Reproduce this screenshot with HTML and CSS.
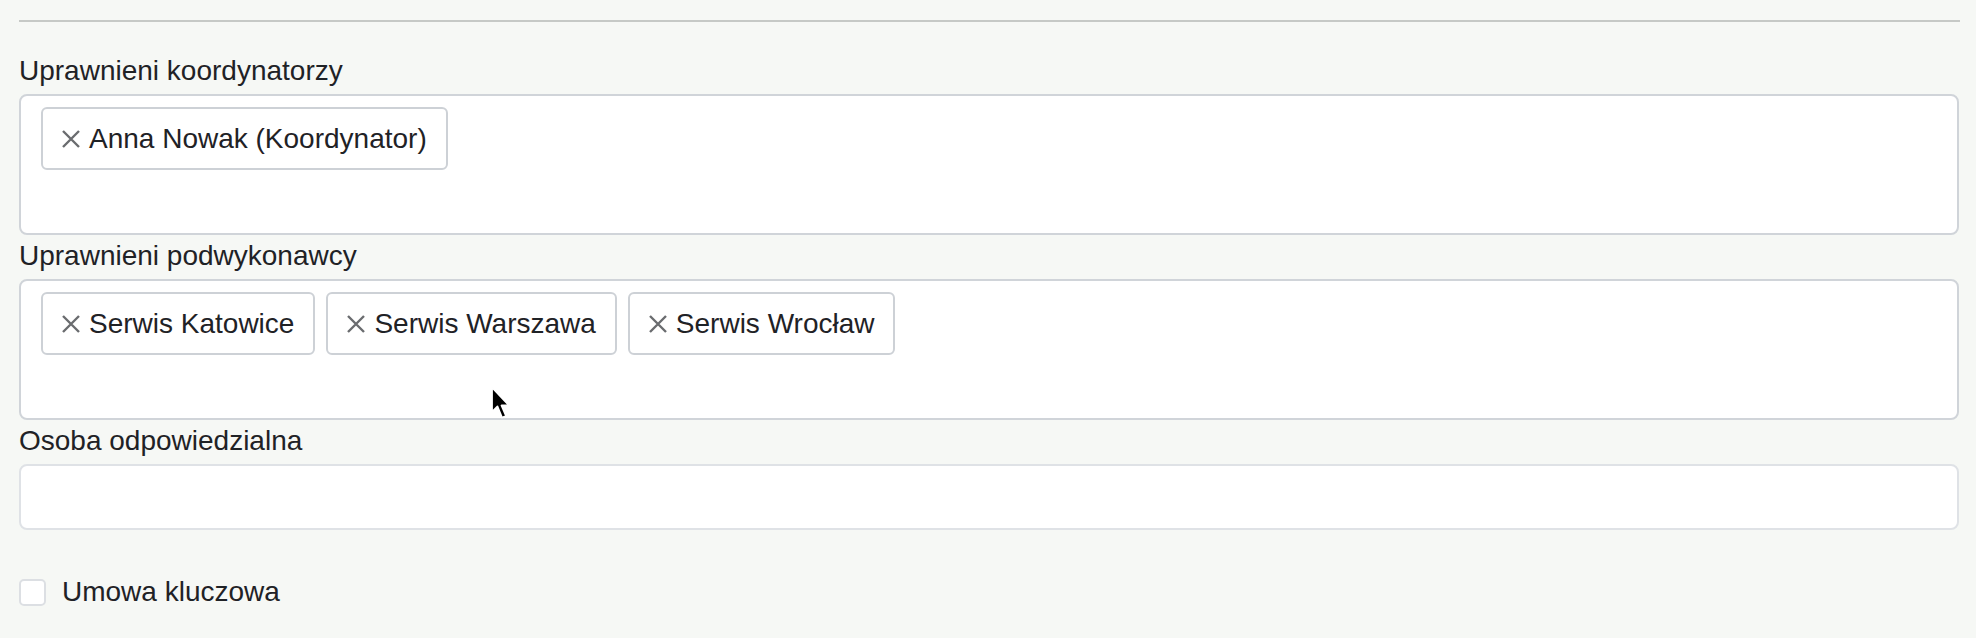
FILE: index.html
```html
<!DOCTYPE html>
<html lang="pl">
<head>
<meta charset="utf-8">
<title>Formularz</title>
<link rel="stylesheet" href="styles.css">
</head>
<body>
<div class="page">
  <div class="divider"></div>

  <div class="field">
    <label class="label">Uprawnieni koordynatorzy</label>
    <div class="multi">
      <div class="chips">
        <span class="chip"><svg class="x" viewBox="0 0 20 20"><path d="M2 2 L18 18 M18 2 L2 18"/></svg><span>Anna Nowak (Koordynator)</span></span>
      </div>
    </div>
  </div>

  <div class="field">
    <label class="label">Uprawnieni podwykonawcy</label>
    <div class="multi">
      <div class="chips">
        <span class="chip"><svg class="x" viewBox="0 0 20 20"><path d="M2 2 L18 18 M18 2 L2 18"/></svg><span>Serwis Katowice</span></span>
        <span class="chip"><svg class="x" viewBox="0 0 20 20"><path d="M2 2 L18 18 M18 2 L2 18"/></svg><span>Serwis Warszawa</span></span>
        <span class="chip"><svg class="x" viewBox="0 0 20 20"><path d="M2 2 L18 18 M18 2 L2 18"/></svg><span>Serwis Wrocław</span></span>
      </div>
    </div>
  </div>

  <div class="field">
    <label class="label">Osoba odpowiedzialna</label>
    <div class="input"></div>
  </div>

  <div class="check-row">
    <span class="checkbox"></span>
    <span class="check-label">Umowa kluczowa</span>
  </div>
</div>

<svg class="cursor" viewBox="0 0 24 38" width="24" height="38">
  <path d="M2 1.5 L2 26 L7.5 20.5 L12 31.5 L16 30 L11.5 19.5 L19 19.5 Z" fill="#000" stroke="#fff" stroke-width="1.8" stroke-linejoin="round"/>
</svg>
</body>
</html>
```

FILE: styles.css
```css
html, body {
  margin: 0;
  padding: 0;
  background: #f6f8f5;
}

body {
  font-family: "Liberation Sans", Arial, sans-serif;
  color: #1f2226;
  position: relative;
  width: 1976px;
  height: 638px;
  overflow: hidden;
}

.page {
  padding: 20px 17px 0 19px;
}

.divider {
  height: 0;
  border-top: 2px solid #c6c9c6;
  margin-right: -1px;
  margin-bottom: 32px;
}

.field {
  display: flex;
  flex-direction: column;
  margin-bottom: 4px;
}

.label {
  font-size: 28px;
  line-height: 34px;
  margin-bottom: 6px;
}

.multi {
  box-sizing: border-box;
  height: 141px;
  background: #fff;
  border: 2px solid #d0d4d9;
  border-radius: 8px;
  padding: 11px 20px;
}

.chips {
  display: flex;
  flex-wrap: wrap;
  gap: 11px;
}

.chip {
  box-sizing: border-box;
  height: 63px;
  display: inline-flex;
  align-items: center;
  gap: 8px;
  padding: 0 19px 0 18px;
  border: 2px solid #cdd1d6;
  border-radius: 6px;
  background: #fff;
  font-size: 28px;
  line-height: 34px;
  color: #1f2226;
}

.x {
  width: 20px;
  height: 20px;
  flex: none;
}

.x path {
  stroke: #6a6c6f;
  stroke-width: 2.4;
  fill: none;
}

.input {
  box-sizing: border-box;
  height: 66px;
  background: #fff;
  border: 2px solid #dfe2e6;
  border-radius: 8px;
}

.check-row {
  display: flex;
  align-items: center;
  gap: 16px;
  margin-top: 45px;
}

.checkbox {
  box-sizing: border-box;
  width: 27px;
  height: 27px;
  background: #fff;
  border: 2px solid #dcdfe3;
  border-radius: 5px;
}

.check-label {
  font-size: 28px;
  line-height: 34px;
}

.cursor {
  position: absolute;
  left: 490px;
  top: 386px;
}
```
